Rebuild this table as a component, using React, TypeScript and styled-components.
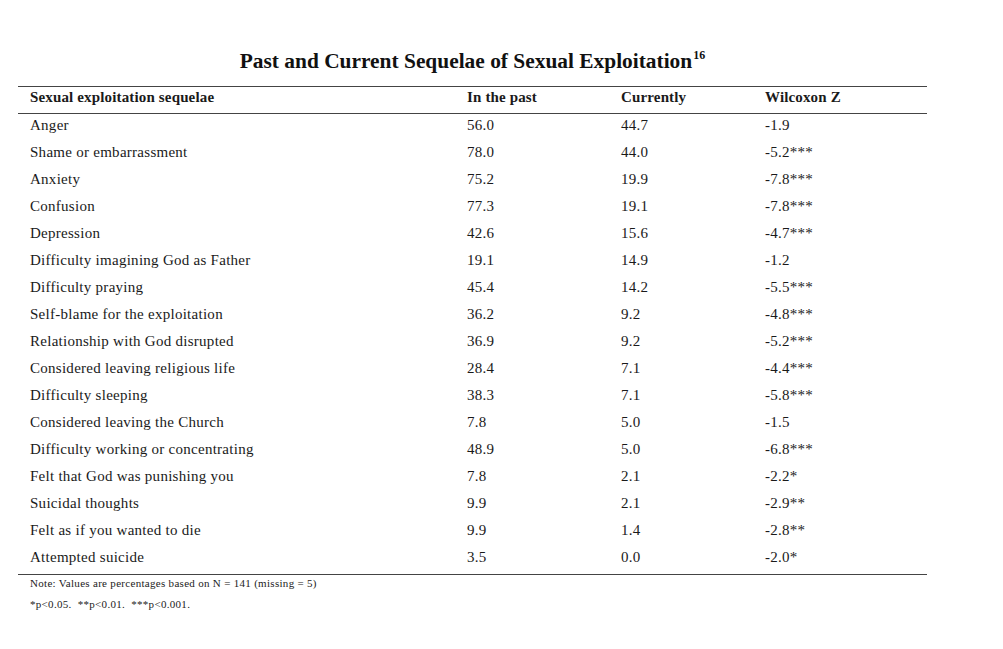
import React from "react";
import styled, { createGlobalStyle } from "styled-components";

const Global = createGlobalStyle`
  html, body { margin: 0; padding: 0; background: #fff; }
  body { font-family: "Liberation Serif", "Times New Roman", serif; color: #1a1a1a; }
`;

const Page = styled.div`
  width: 1003px;
  height: 649px;
  padding: 48px 0 0 18px;
  box-sizing: border-box;
`;

const Block = styled.div`
  width: 909px;
`;

const Title = styled.h1`
  margin: 0;
  text-align: center;
  font-size: 21.4px;
  line-height: 26px;
  font-weight: bold;
  color: #111;
  sup {
    font-size: 12px;
    position: relative;
    top: -1px;
    vertical-align: super;
    line-height: 0;
    margin-left: 1px;
  }
`;

const Table = styled.div`
  margin-top: 12px;
  border-top: 1px solid #444;
  border-bottom: 1px solid #444;
`;

const Row = styled.div<{ $head?: boolean }>`
  display: grid;
  grid-template-columns: 437px 154px 144px 1fr;
  padding: 0 0 5px 12px;
  height: ${(p) => (p.$head ? "27px" : "27.05px")};
  box-sizing: border-box;
  align-items: center;
  font-size: 15px;
  letter-spacing: ${(p) => (p.$head ? "0.15px" : "0.27px")};
  font-weight: ${(p) => (p.$head ? "bold" : "normal")};
  border-bottom: ${(p) => (p.$head ? "1px solid #444" : "none")};
  color: #1a1a1a;
`;

const Body = styled.div``;

const Notes = styled.div`
  padding: 0 0 0 12px;
  margin-top: -2px;
  font-size: 11px;
  letter-spacing: 0.3px;
  line-height: 21px;
  color: #222;
`;

const rows: [string, string, string, string][] = [
  ["Anger", "56.0", "44.7", "-1.9"],
  ["Shame or embarrassment", "78.0", "44.0", "-5.2***"],
  ["Anxiety", "75.2", "19.9", "-7.8***"],
  ["Confusion", "77.3", "19.1", "-7.8***"],
  ["Depression", "42.6", "15.6", "-4.7***"],
  ["Difficulty imagining God as Father", "19.1", "14.9", "-1.2"],
  ["Difficulty praying", "45.4", "14.2", "-5.5***"],
  ["Self-blame for the exploitation", "36.2", "9.2", "-4.8***"],
  ["Relationship with God disrupted", "36.9", "9.2", "-5.2***"],
  ["Considered leaving religious life", "28.4", "7.1", "-4.4***"],
  ["Difficulty sleeping", "38.3", "7.1", "-5.8***"],
  ["Considered leaving the Church", "7.8", "5.0", "-1.5"],
  ["Difficulty working or concentrating", "48.9", "5.0", "-6.8***"],
  ["Felt that God was punishing you", "7.8", "2.1", "-2.2*"],
  ["Suicidal thoughts", "9.9", "2.1", "-2.9**"],
  ["Felt as if you wanted to die", "9.9", "1.4", "-2.8**"],
  ["Attempted suicide", "3.5", "0.0", "-2.0*"],
];

export default function App() {
  return (
    <>
      <Global />
      <Page>
        <Block>
          <Title>
            Past and Current Sequelae of Sexual Exploitation<sup>16</sup>
          </Title>
          <Table>
            <Row $head>
              <span>Sexual exploitation sequelae</span>
              <span>In the past</span>
              <span>Currently</span>
              <span>Wilcoxon Z</span>
            </Row>
            <Body>
              {rows.map((r) => (
                <Row key={r[0]}>
                  <span>{r[0]}</span>
                  <span>{r[1]}</span>
                  <span>{r[2]}</span>
                  <span>{r[3]}</span>
                </Row>
              ))}
            </Body>
          </Table>
          <Notes>
            <div>Note: Values are percentages based on N = 141 (missing = 5)</div>
            <div>*p&lt;0.05. &nbsp;**p&lt;0.01. &nbsp;***p&lt;0.001.</div>
          </Notes>
        </Block>
      </Page>
    </>
  );
}
